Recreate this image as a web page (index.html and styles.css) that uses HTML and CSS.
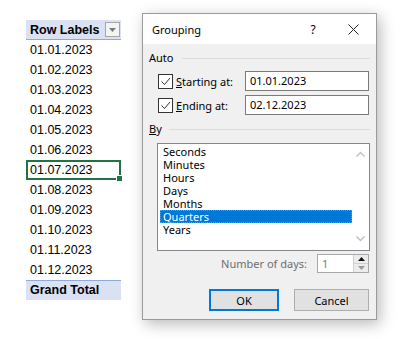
FILE: index.html
```html
<!DOCTYPE html>
<html>
<head>
<meta charset="utf-8">
<link rel="stylesheet" href="styles.css">
</head>
<body>
<div class="page">
  <div class="pivot">
    <div class="cell head"><span>Row Labels</span><span class="dd"><svg width="7" height="4" viewBox="0 0 7 4"><path d="M0 0h7L3.5 4z" fill="#7a7a7a"/></svg></span></div>
    <div class="cell">01.01.2023</div>
    <div class="cell">01.02.2023</div>
    <div class="cell">01.03.2023</div>
    <div class="cell">01.04.2023</div>
    <div class="cell">01.05.2023</div>
    <div class="cell">01.06.2023</div>
    <div class="cell active">01.07.2023<span class="handle"></span></div>
    <div class="cell">01.08.2023</div>
    <div class="cell">01.09.2023</div>
    <div class="cell">01.10.2023</div>
    <div class="cell">01.11.2023</div>
    <div class="cell">01.12.2023</div>
    <div class="cell total">Grand Total</div>
  </div>

  <div class="dialog">
    <div class="titlebar">
      <span class="title">Grouping</span>
      <span class="help">?</span>
      <span class="close"><svg width="11" height="11" viewBox="0 0 11 11"><path d="M0.5 0.5l10 10M10.5 0.5l-10 10" stroke="#222" stroke-width="1"/></svg></span>
    </div>
    <div class="body">
      <div class="group"><span>Auto</span><span class="rule"></span></div>
      <div class="frow first">
        <span class="check"><svg width="13" height="13" viewBox="0 0 13 13"><path d="M2.5 6.5l3 3 5.5-6.5" fill="none" stroke="#333" stroke-width="1"/></svg></span>
        <span class="flabel"><u>S</u>tarting at:</span>
        <span class="input">01.01.2023</span>
      </div>
      <div class="frow">
        <span class="check"><svg width="13" height="13" viewBox="0 0 13 13"><path d="M2.5 6.5l3 3 5.5-6.5" fill="none" stroke="#333" stroke-width="1"/></svg></span>
        <span class="flabel"><u>E</u>nding at:</span>
        <span class="input">02.12.2023</span>
      </div>
      <div class="group by"><span><u>B</u>y</span><span class="rule"></span></div>
      <div class="listbox">
        <ul class="items">
          <li>Seconds</li>
          <li>Minutes</li>
          <li>Hours</li>
          <li>Days</li>
          <li>Months</li>
          <li class="sel">Quarters</li>
          <li>Years</li>
        </ul>
        <div class="scroll">
          <svg width="9" height="6" viewBox="0 0 9 6"><path d="M0.5 5.5l4-4 4 4" fill="none" stroke="#c2c2c2" stroke-width="1.5"/></svg>
          <svg width="9" height="6" viewBox="0 0 9 6"><path d="M0.5 0.5l4 4 4-4" fill="none" stroke="#c2c2c2" stroke-width="1.5"/></svg>
        </div>
      </div>
      <div class="days">
        <span class="dlabel">Number of days:</span>
        <span class="spin">
          <span class="spinval">1</span>
          <span class="spinbtns">
            <span class="sb"><svg width="7" height="4" viewBox="0 0 7 4"><path d="M0 4h7L3.5 0z" fill="#111"/></svg></span>
            <span class="sb"><svg width="7" height="4" viewBox="0 0 7 4"><path d="M0 0h7L3.5 4z" fill="#9a9a9a"/></svg></span>
          </span>
        </span>
      </div>
      <div class="buttons">
        <span class="btn ok">OK</span>
        <span class="btn">Cancel</span>
      </div>
    </div>
  </div>
</div>
</body>
</html>
```

FILE: styles.css
```css
* { box-sizing: border-box; }
html, body { margin: 0; padding: 0; background: #fff; }
.page {
  display: flex;
  align-items: flex-start;
  width: 417px;
  height: 339px;
  overflow: hidden;
}
.pivot {
  margin: 20px 0 0 26px;
  width: 95px;
  font-family: "Liberation Sans", Arial, sans-serif;
  font-size: 12.5px;
  color: #000;
  display: flex;
  flex-direction: column;
}
.cell {
  height: 20px;
  line-height: 20px;
  padding-left: 4px;
  position: relative;
  white-space: nowrap;
}
.head {
  background: #d9e1f2;
  border-bottom: 1px solid #8ea9db;
  font-weight: bold;
  display: flex;
  align-items: center;
  justify-content: space-between;
  padding-right: 1px;
}
.dd {
  width: 15px;
  height: 15px;
  border: 1px solid #a6a6a6;
  background: #f4f4f4;
  display: flex;
  align-items: center;
  justify-content: center;
}
.dd svg { display: block; }
.active {
  border: 2px solid #217346;
  line-height: 16px;
  padding-left: 2px;
}
.handle {
  position: absolute;
  right: -4px;
  bottom: -4px;
  width: 5px;
  height: 5px;
  background: #217346;
  border: 1px solid #fff;
  box-sizing: content-box;
}
.total {
  background: #d9e1f2;
  border-top: 1px solid #8ea9db;
  font-weight: bold;
  line-height: 19px;
}

.dialog {
  margin: 13px 0 0 21px;
  width: 235px;
  height: 307px;
  border: 1px solid #9a9a9a;
  background: #f0f0f0;
  box-shadow: 3px 4px 14px rgba(0,0,0,0.28);
  font-family: "Noto Sans", "Open Sans", sans-serif;
  font-size: 11px;
  color: #000;
  display: flex;
  flex-direction: column;
}
.titlebar {
  height: 30px;
  background: #fff;
  display: flex;
  align-items: center;
  padding-left: 9px;
}
.title { flex: 1; }
.help { width: 14px; margin-right: 28px; text-align: center; font-size: 12px; }
.close { width: 11px; margin-right: 17px; display: flex; }
.close svg { display: block; }
.body {
  display: flex;
  flex-direction: column;
  padding: 7px 6px 0 6px;
}
.group {
  display: flex;
  align-items: center;
  height: 14px;
  line-height: 14px;
}
.group .rule {
  flex: 1;
  height: 1px;
  background: #dcdcdc;
  margin-left: 9px;
}
.group.by { margin-top: 7px; }
.group.by .rule { margin-left: 7px; }
.frow {
  display: flex;
  align-items: center;
  height: 20px;
  margin-top: 4px;
  padding-left: 9px;
}
.frow.first { margin-top: 6px; }
.check {
  width: 15px;
  height: 15px;
  border: 1px solid #333;
  background: #fff;
  display: flex;
  align-items: center;
  justify-content: center;
}
.check svg { display: block; }
.flabel { margin-left: 3px; width: 69px; white-space: nowrap; }
.input {
  flex: 1;
  height: 20px;
  border: 1px solid #7a7a7a;
  background: #fff;
  padding-left: 4px;
  line-height: 18px;
  margin-right: 1px;
}
.listbox {
  margin: 7px 0 0 8px;
  height: 108px;
  border: 1px solid #828790;
  background: #fff;
  display: flex;
}
.items {
  list-style: none;
  margin: 0;
  padding: 1px 0 0 2px;
  flex: 1;
}
.items li {
  height: 13px;
  line-height: 13px;
  padding-left: 3px;
  overflow: hidden;
}
.items li.sel {
  background: #0078d7;
  color: #fff;
  outline: 1px dotted #4aa0e8;
  outline-offset: -1px;
}
.scroll {
  width: 17px;
  display: flex;
  flex-direction: column;
  justify-content: space-between;
  align-items: center;
  padding: 7px 0 8px 0;
}
.scroll svg { display: block; }
.days {
  display: flex;
  align-items: center;
  justify-content: flex-end;
  margin-top: 3px;
  height: 19px;
}
.dlabel { color: #6d6d6d; margin-right: 10px; }
.spin {
  width: 52px;
  height: 19px;
  border: 1px solid #a8a8a8;
  background: #f7f7f7;
  display: flex;
  margin-right: 1px;
}
.spinval {
  flex: 1;
  color: #7a7a7a;
  padding-left: 4px;
  line-height: 17px;
  background: #fff;
}
.spinbtns {
  width: 15px;
  display: flex;
  flex-direction: column;
  border-left: 1px solid #d0d0d0;
}
.sb {
  flex: 1;
  display: flex;
  align-items: center;
  justify-content: center;
  background: #ececec;
}
.sb + .sb { border-top: 1px solid #d0d0d0; }
.sb svg { display: block; }
.buttons {
  display: flex;
  justify-content: flex-end;
  gap: 15px;
  margin-top: 16px;
  margin-right: 1px;
}
.btn {
  height: 22px;
  width: 75px;
  border: 1px solid #adadad;
  background: #e1e1e1;
  display: flex;
  align-items: center;
  justify-content: center;
}
.btn.ok {
  width: 70px;
  border: 2px solid #0078d7;
}
```
